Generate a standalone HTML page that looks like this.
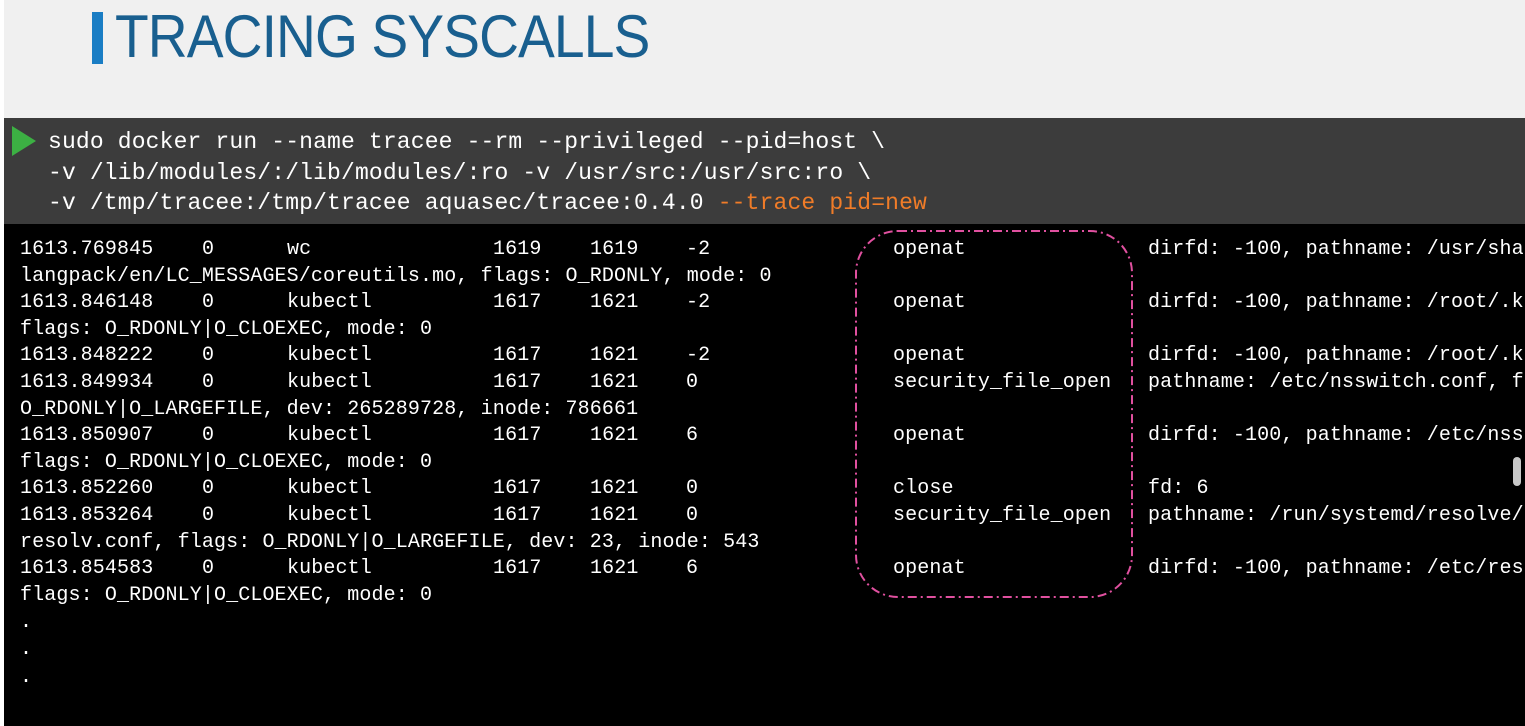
<!DOCTYPE html>
<html><head><meta charset="utf-8"><style>
body{margin:0;width:1525px;height:726px;overflow:hidden;background:#fff;position:relative;font-family:"Liberation Mono",monospace}
.top{position:absolute;left:4px;top:0;width:1521px;height:118px;background:#f0f0f0}
.bar{position:absolute;left:92px;top:12px;width:11px;height:52px;background:#1a7dc4}
.title{position:absolute;left:115px;top:2px;font-family:"Liberation Sans",sans-serif;font-size:60px;color:#195f8f;letter-spacing:-1px;transform:scaleX(.92);transform-origin:left}
.cmd{position:absolute;left:4px;top:118px;width:1521px;height:106px;background:#3c3c3c}
.cl{position:absolute;left:44px;font-size:23px;color:#fff;white-space:pre;line-height:30px;letter-spacing:0.15px}
.term{position:absolute;left:4px;top:224px;width:1521px;height:502px;background:#000}
.r{position:absolute;font-size:20px;color:#fff;white-space:pre;line-height:26px;letter-spacing:0.12px}
</style></head><body>
<div class="top"></div><div class="bar"></div><div class="title">TRACING SYSCALLS</div>
<div class="cmd">
<svg style="position:absolute;left:8px;top:8px" width="26" height="30"><polygon points="0,0 24,15 0,30" fill="#3cb043"/></svg>
<div class="cl" style="top:9px">sudo docker run --name tracee --rm --privileged --pid=host \</div>
<div class="cl" style="top:40px">-v /lib/modules/:/lib/modules/:ro -v /usr/src:/usr/src:ro \</div>
<div class="cl" style="top:70px">-v /tmp/tracee:/tmp/tracee aquasec/tracee:0.4.0 <span style="color:#f07c28">--trace pid=new</span></div>
</div>
<div class="term"></div>
<div id="t"></div>
<svg style="position:absolute;left:0;top:0" width="1525" height="726">
<rect x="856" y="231" width="276" height="366" rx="42" fill="none" stroke="#e0509f" stroke-width="2" stroke-dasharray="9 4 2 4"/>
<rect x="1513" y="457" width="8" height="29" rx="4" fill="#c8c8c8"/>
</svg>
<script>
var rows=[
[237,["1613.769845","0","wc","1619","1619","-2","openat","dirfd: -100, pathname: /usr/sha"]],
[264,"langpack/en/LC_MESSAGES/coreutils.mo, flags: O_RDONLY, mode: 0"],
[290,["1613.846148","0","kubectl","1617","1621","-2","openat","dirfd: -100, pathname: /root/.k"]],
[317,"flags: O_RDONLY|O_CLOEXEC, mode: 0"],
[343,["1613.848222","0","kubectl","1617","1621","-2","openat","dirfd: -100, pathname: /root/.k"]],
[370,["1613.849934","0","kubectl","1617","1621","0","security_file_open","pathname: /etc/nsswitch.conf, f"]],
[397,"O_RDONLY|O_LARGEFILE, dev: 265289728, inode: 786661"],
[423,["1613.850907","0","kubectl","1617","1621","6","openat","dirfd: -100, pathname: /etc/nss"]],
[450,"flags: O_RDONLY|O_CLOEXEC, mode: 0"],
[476,["1613.852260","0","kubectl","1617","1621","0","close","fd: 6"]],
[503,["1613.853264","0","kubectl","1617","1621","0","security_file_open","pathname: /run/systemd/resolve/"]],
[530,"resolv.conf, flags: O_RDONLY|O_LARGEFILE, dev: 23, inode: 543"],
[556,["1613.854583","0","kubectl","1617","1621","6","openat","dirfd: -100, pathname: /etc/res"]],
[583,"flags: O_RDONLY|O_CLOEXEC, mode: 0"],
[610,"."],[637,"."],[665,"."]];
var xs=[20,202,287,493,590,686,893,1148],h="";
rows.forEach(function(r){if(typeof r[1]=="string")h+='<div class="r" style="left:20px;top:'+r[0]+'px">'+r[1]+'</div>';else r[1].forEach(function(c,i){h+='<div class="r" style="left:'+xs[i]+'px;top:'+r[0]+'px">'+c+'</div>'})});
document.getElementById("t").innerHTML=h;
</script>
</body></html>
